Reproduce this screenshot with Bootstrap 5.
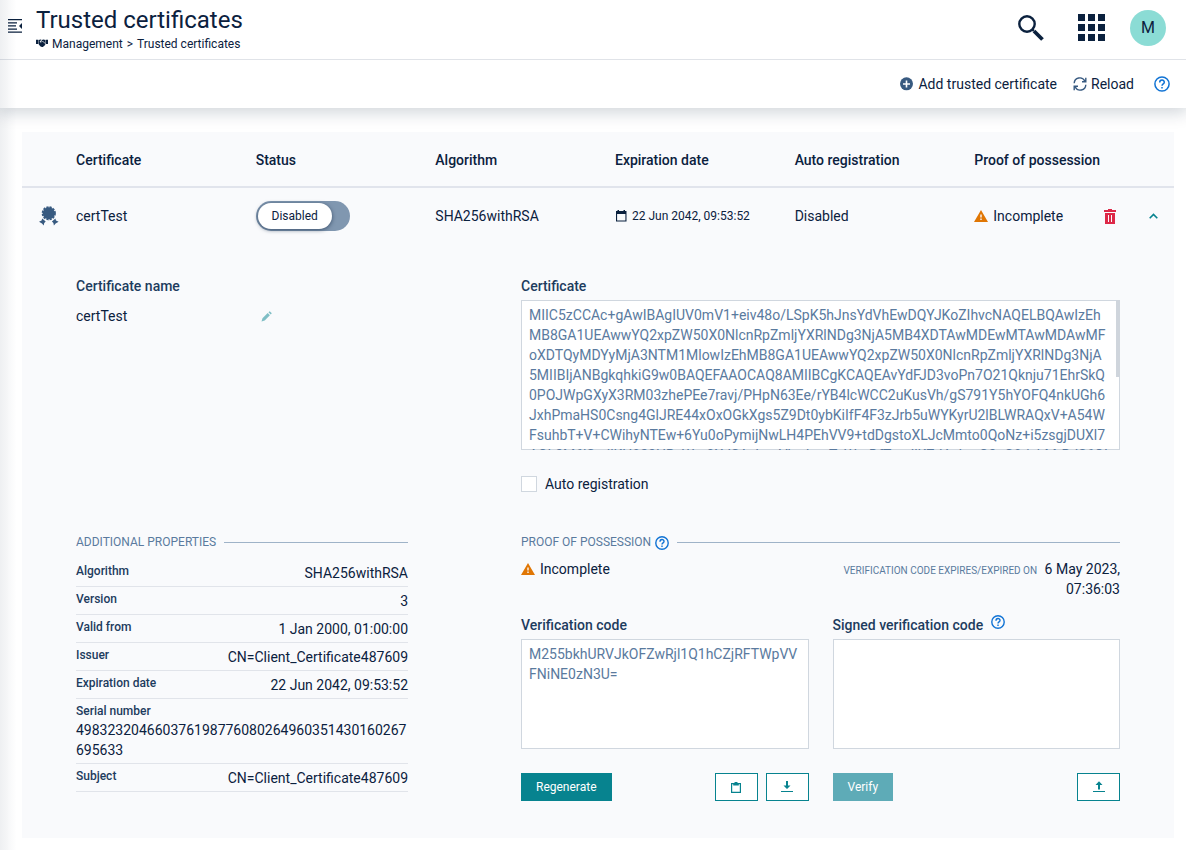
<!DOCTYPE html>
<html lang="en">
<head>
<meta charset="utf-8">
<meta name="viewport" content="width=device-width, initial-scale=1">
<title>Trusted certificates</title>
<link href="https://cdn.jsdelivr.net/npm/bootstrap@5.3.0/dist/css/bootstrap.min.css" rel="stylesheet">
<style>
:root { --ink: #0b213e; --label: #1d3c5e; --muted: #5a7a9e; --slate: #385a80; --teal: #07838f; --line: #d0d7df; --blue: #1173d4; --warn: #e07604; --panel: #f9fafc; }
body { font-family: Roboto, "Liberation Sans", sans-serif; font-size: 14px; line-height: 20px; color: var(--ink); background: #fff; }
svg { display: block; flex: none; }
a { color: inherit; text-decoration: none; }
a:hover { text-decoration: underline; }
.plain-btn { border: 0; background: none; padding: 0; color: inherit; display: flex; align-items: center; }
.top-bar { height: 60px; border-bottom: 1px solid #e0e3e8; padding: 0 20px 4px 8px; position: relative; z-index: 1; background: #fff; }
.title-block { padding-left: 14px; }
.page-title { font-size: 24px; line-height: 32px; font-weight: 400; margin: 0; }
.crumbs { font-size: 12px; line-height: 16px; gap: 4px; }
.find { margin-right: 34px; }
.apps { margin-right: 25px; }
.avatar { width: 36px; height: 36px; background: #8bdcd5; font-size: 16px; }
.tool-bar { height: 48px; padding: 0 16px; box-shadow: 0 2px 16px 2px rgba(11, 33, 62, .2); position: relative; background: #fff; }
.side-shade { position: fixed; left: 0; top: 0; bottom: 0; width: 16px; background: linear-gradient(90deg, rgba(11, 33, 62, .07), rgba(11, 33, 62, 0)); pointer-events: none; z-index: 5; }
.panel { margin: 24px 12px 12px 22px; background: var(--panel); }
.cert-table { width: 100%; table-layout: fixed; }
.cert-table th { height: 55px; padding: 1px 8px 0; font-weight: 500; }
.cert-table thead { border-bottom: 2px solid #e1e4ec; }
.cert-table .cert-row td { height: 57px; padding: 0 8px; }
.cert-table .cert-row .end-cell { padding: 0 3px; }
.cert-table .detail { padding: 32px 54px 37px; }
.icon-col { width: 46px; }
.end-col { width: 28px; }
.small-date { font-size: 12px; }
.red { color: #dd2847; }
.trash { margin-right: 22px; }
.teal { color: var(--teal); }
.warn { color: var(--warn); }
.warn-line { display: flex; align-items: center; gap: 5px; }
.help { color: var(--blue); }
.slate { color: var(--slate); }
.award { margin-left: 9px; }
.flip { display: inline-flex; width: 94px; height: 30px; padding: 2px; border-radius: 15px; background: #8097b0; cursor: pointer; }
.flip-knob { width: 74px; border-radius: 13px; background: #fff; font-size: 12px; line-height: 26px; text-align: center; box-shadow: 0 1px 4px rgba(11, 33, 62, .6); }
.field-label { font-weight: 500; color: var(--label); margin-bottom: 4px; display: block; }
.name-line { width: 196px; margin-top: 10px; }
.code-box { display: block; width: 100%; border: 0; box-shadow: inset 0 0 0 1px var(--line); border-radius: 0; background: #fff; color: var(--muted); padding: 5px 8px; font-size: 14px; line-height: 20px; resize: none; word-break: break-all; }
.code-box.tall { height: 150px; padding-right: 12px; scrollbar-width: none; }
.code-box.short { height: 110px; }
.scroll-thumb { position: absolute; top: 0; right: 0; width: 4px; height: 77px; background: #cfd5dc; pointer-events: none; }
.tick { appearance: none; width: 16px; height: 16px; margin: 0; border: 1px solid var(--line); background: #fff; }
.tick:checked { background: var(--teal); }
.legend-line { font-size: 12px; line-height: 17px; color: var(--muted); font-weight: 400; text-transform: uppercase; margin: 40px 0 8px; display: flex; align-items: center; gap: 8px; }
.legend-line::after { content: ""; flex: 1; height: 1px; background: #9fb3c8; }
.left-pane { padding-right: 89px; }
.props { margin: 0; }
.prop { display: flex; justify-content: space-between; padding: 4px 0 3px; border-bottom: 1px solid #e1e4ea; }
.prop dt { font-size: 12px; line-height: 17px; font-weight: 500; color: var(--label); }
.prop dd { margin: 0; text-align: right; }
.prop.stacked { display: block; }
.prop.stacked dd { text-align: left; word-break: break-all; }
.expiry { width: 280px; }
.expiry-label { font-size: 10px; line-height: 14px; color: var(--muted); }
.act { height: 28px; font-size: 12px; line-height: 16px; border-radius: 0; border: 1px solid var(--teal); padding: 0 14px; color: var(--teal); background: #fff; display: inline-flex; align-items: center; }
.act.solid { background: var(--teal); color: #fff; }
.act:disabled { background: #5eabb7; border-color: #5eabb7; color: #fff; opacity: 1; }
.act.square { width: 43px; padding: 0; justify-content: center; }
</style>
</head>
<body>
<div class="side-shade"></div>
<header class="top-bar d-flex align-items-center">
  <button class="plain-btn mb-1" type="button" aria-label="Toggle navigation">
    <svg width="14" height="14" viewBox="0 0 14 14" fill="currentColor"><path d="M0 0h14v1.300H0zM0 3.200h9v1.300H0zM0 6.300h8v1.300H0zM0 9.400h9v1.300H0zM0 12.500h14v1.300H0zM14 4v6l-3-3z"/></svg>
  </button>
  <div class="title-block flex-grow-1">
    <h1 class="page-title">Trusted certificates</h1>
    <nav class="crumbs d-flex align-items-center" aria-label="Breadcrumb">
      <svg width="12" height="9" viewBox="0 0 12 9" fill="currentColor"><path d="M0 .8h2.300V5H0zM12 .8V5H9.700V.8zM2.700 1L4.600.5 5.500.8 3.900 2.300c-.5.900.9 1.600 1.900.7l.8-.6L9.400 4.900 9 6.300 7.900 6.900 7 7.900 5.900 8 4.200 7.200 2.700 5.300zM9.300 1v3.200L6.800 1.900 5.300 2.800c-.5.100-.7-.1-.6-.3L6.400.8 7.600.5z"/></svg>
      <a href="#">Management</a><span>&gt;</span><a href="#">Trusted certificates</a>
    </nav>
  </div>
  <button class="plain-btn find" type="button" aria-label="Search">
    <svg width="26" height="26" viewBox="0 0 26 26" fill="none" stroke="currentColor"><circle cx="9" cy="9" r="7.700" stroke-width="2.400"/><path d="M14 14l1.800 1.800" stroke-width="2.400"/><path d="M16 16l8.500 8.500" stroke-width="3.800"/></svg>
  </button>
  <button class="plain-btn apps" type="button" aria-label="Applications">
    <svg width="27" height="27" viewBox="0 0 27 27" fill="currentColor"><path d="M0 0h7v7H0zM10 0h7v7h-7zM20 0h7v7h-7zM0 10h7v7H0zM10 10h7v7h-7zM20 10h7v7h-7zM0 20h7v7H0zM10 20h7v7h-7zM20 20h7v7h-7z"/></svg>
  </button>
  <button class="plain-btn avatar rounded-circle justify-content-center" type="button">M</button>
</header>

<div class="tool-bar d-flex align-items-center justify-content-end gap-3">
  <button class="plain-btn gap-1" type="button">
    <svg class="slate" width="14" height="14" viewBox="0 0 14 14"><circle cx="6.500" cy="6.800" r="6.500" fill="currentColor"/><path d="M6.500 3.500v7M3 7h7" stroke="#fff" stroke-width="1.600"/></svg>
    Add trusted certificate
  </button>
  <button class="plain-btn gap-1" type="button">
    <svg class="slate" width="14" height="14" viewBox="0 0 14 14" fill="none" stroke="currentColor" stroke-width="1.400"><path d="M1.200 6.300A5.600 5.600 0 0 1 11.800 4M12.800 7.700A5.600 5.600 0 0 1 2.200 10M12.800.8v3.900H9M1.200 13.200V9.300H5"/></svg>
    Reload
  </button>
  <button class="plain-btn help ms-1" type="button" aria-label="Help">
    <svg width="16" height="16" viewBox="0 0 16 16" fill="none" stroke="currentColor" stroke-width="1.500"><circle cx="8" cy="8" r="7.100"/><path d="M5.700 6.500C5.700 3.300 10.300 3.300 10.300 6.200c0 1.600-2.300 1.700-2.300 3.500M8 10.900v1.600"/></svg>
  </button>
</div>

<main class="panel">
  <table class="cert-table">
    <colgroup><col class="icon-col"><col><col><col><col><col><col><col class="end-col"></colgroup>
    <thead>
      <tr><th></th><th scope="col">Certificate</th><th scope="col">Status</th><th scope="col">Algorithm</th><th scope="col">Expiration date</th><th scope="col">Auto registration</th><th scope="col">Proof of possession</th><th></th></tr>
    </thead>
    <tbody>
      <tr class="cert-row">
        <td class="slate"><svg class="award" width="20" height="20" viewBox="0 0 20 20" fill="currentColor"><circle cx="9.800" cy="7.300" r="6"/><circle cx="9.800" cy="7.300" r="6.200" fill="none" stroke="currentColor" stroke-width="1.800" stroke-dasharray="2.200 1.046"/><path d="M0 15.800l2.600-1.200.6-2.200 3.500 3-1.500 1.500-.5 2.500-1.700-1.800zM19.600 15.800l-2.600-1.200-.6-2.200-3.500 3 1.500 1.500.5 2.500 1.700-1.800z"/></svg></td>
        <td>certTest</td>
        <td><label class="flip align-middle"><input class="visually-hidden" type="checkbox" role="switch"><span class="flip-knob">Disabled</span></label></td>
        <td>SHA256withRSA</td>
        <td><span class="small-date d-flex align-items-center gap-1">
          <svg width="13" height="12" viewBox="0 0 13 12" fill="currentColor"><path d="M1 1h1.500V0h1.500v1h4.500V0h1.500v1H11.500v10.500H1zM2.100 4v6.400h8.300V4z" fill-rule="evenodd"/></svg>
          22 Jun 2042, 09:53:52</span></td>
        <td>Disabled</td>
        <td>
          <div class="warn-line">
            <svg class="warn" width="14" height="12" viewBox="0 0 14 12" fill="currentColor"><path fill-rule="evenodd" d="M7 0l7 12H0zM6.300 4.500v3h1.400v-3zm0 4v1.400h1.400V8.500z"/></svg>
            <span>Incomplete</span>
            <button class="plain-btn red ms-auto trash" type="button" aria-label="Delete">
              <svg width="12" height="15" viewBox="0 0 12 15" fill="currentColor"><path fill-rule="evenodd" d="M4 0h4v1h4v2H0V1h4zM1 4h10v11H1zM4 6v7h1V6zm3 0v7h1V6z"/></svg>
            </button>
          </div>
        </td>
        <td class="teal end-cell"><button class="plain-btn" type="button" aria-label="Collapse row" aria-expanded="true">
          <svg width="9" height="6" viewBox="0 0 9 6" fill="none" stroke="currentColor" stroke-width="1.600"><path d="M.7 5.200L4.500 1.400l3.800 3.800"/></svg></button></td>
      </tr>
      <tr>
        <td class="detail" colspan="8">
          <div class="row">
            <div class="col-5">
              <span class="field-label">Certificate name</span>
              <div class="name-line d-flex align-items-center justify-content-between">
                <span>certTest</span>
                <button class="plain-btn teal opacity-50" type="button" aria-label="Edit name">
                  <svg width="11" height="11" viewBox="0 0 11 11" fill="currentColor"><path d="M1.500 7.300L6.700 2.100l2.200 2.200-5.200 5.200L.5 10.500zM7.500 1.300L8.700.2l2.100 2.100-1.100 1.200z"/></svg>
                </button>
              </div>
            </div>
            <div class="col-7">
              <label class="field-label" for="pem">Certificate</label>
              <div class="position-relative">
                <textarea class="code-box tall" id="pem" readonly spellcheck="false">MIIC5zCCAc+gAwIBAgIUV0mV1+eiv48o/LSpK5hJnsYdVhEwDQYJKoZIhvcNAQELBQAwIzEhMB8GA1UEAwwYQ2xpZW50X0NlcnRpZmljYXRlNDg3NjA5MB4XDTAwMDEwMTAwMDAwMFoXDTQyMDYyMjA3NTM1MlowIzEhMB8GA1UEAwwYQ2xpZW50X0NlcnRpZmljYXRlNDg3NjA5MIIBIjANBgkqhkiG9w0BAQEFAAOCAQ8AMIIBCgKCAQEAvYdFJD3voPn7O21Qknju71EhrSkQ0POJWpGXyX3RM03zhePEe7ravj/PHpN63Ee/rYB4lcWCC2uKusVh/gS791Y5hYOFQ4nkUGh6JxhPmaHS0Csng4GlJRE44xOxOGkXgs5Z9Dt0ybKiIfF4F3zJrb5uWYKyrU2lBLWRAQxV+A54WFsuhbT+V+CWihyNTEw+6Yu0oPymijNwLH4PEhVV9+tdDgstoXLJcMmto0QoNz+i5zsgjDUXl7AGL3M6lSedlKH823HBsWm0XJSAsheoVbwhnaTcWnrDfTgndlKZdAshtnG3oG8tjshMrBdS6QIDAQABoy8wLTAMBgNVHRMEBTADAQH/MB0GA1UdDgQWBBR3pYw1kXc9mQeT5uZsVb2rNfLtGDANBgkqhkiG9w0BAQsFAAOCAQEAk8Zr1dQwYt6nHc4JmVxPe0uSg7LbKq2oTfRi9CyWvXNa5hEsDj3GpMz8BlUkQr6tYw1nHc4JmVxPe0uSg7LbKq2oTfRi9CyWvXNa5hEsDj3GpMz8BlUkQr6tYw1nHc4JmVxPe0uSg7LbKq2oTfRi9CyWvXNa5hEsDj3GpMz8BlUkQr6tYw1nHc4JmVxPe0uSg7LbKq2oTfRi9CyWvXNa5hEsDj3GpMz8BlUkQr6tYw==</textarea>
                <span class="scroll-thumb"></span>
              </div>
              <div class="d-flex align-items-center gap-2 mt-4">
                <input class="tick" type="checkbox" id="auto"><label for="auto">Auto registration</label>
              </div>
            </div>
          </div>
          <div class="row">
            <div class="col-5">
              <section class="left-pane">
                <h2 class="legend-line">Additional properties</h2>
                <dl class="props">
                  <div class="prop"><dt>Algorithm</dt><dd>SHA256withRSA</dd></div>
                  <div class="prop"><dt>Version</dt><dd>3</dd></div>
                  <div class="prop"><dt>Valid from</dt><dd>1 Jan 2000, 01:00:00</dd></div>
                  <div class="prop"><dt>Issuer</dt><dd>CN=Client_Certificate487609</dd></div>
                  <div class="prop"><dt>Expiration date</dt><dd>22 Jun 2042, 09:53:52</dd></div>
                  <div class="prop stacked"><dt>Serial number</dt><dd>498323204660376198776080264960351430160267695633</dd></div>
                  <div class="prop"><dt>Subject</dt><dd>CN=Client_Certificate487609</dd></div>
                </dl>
              </section>
            </div>
            <div class="col-7">
              <h2 class="legend-line"><span class="d-flex align-items-center gap-1">Proof of possession
                <button class="plain-btn help" type="button" aria-label="About proof of possession">
                  <svg width="14" height="14" viewBox="0 0 16 16" fill="none" stroke="currentColor" stroke-width="1.600"><circle cx="8" cy="8" r="7.100"/><path d="M5.700 6.500C5.700 3.300 10.300 3.300 10.300 6.200c0 1.600-2.300 1.700-2.300 3.500M8 10.900v1.600"/></svg>
                </button></span></h2>
              <div class="d-flex justify-content-between align-items-start">
                <div class="warn-line">
                  <svg class="warn" width="14" height="12" viewBox="0 0 14 12" fill="currentColor"><path fill-rule="evenodd" d="M7 0l7 12H0zM6.300 4.500v3h1.400v-3zm0 4v1.400h1.400V8.500z"/></svg>
                  <span>Incomplete</span>
                </div>
                <div class="expiry text-end"><span class="expiry-label text-uppercase me-1">Verification code expires/expired on</span> 6 May 2023, 07:36:03</div>
              </div>
              <div class="row mt-3">
                <div class="col-6">
                  <label class="field-label" for="code">Verification code</label>
                  <textarea class="code-box short" id="code" readonly spellcheck="false">M255bkhURVJkOFZwRjl1Q1hCZjRFTWpVVFNiNE0zN3U=</textarea>
                  <div class="d-flex gap-2 mt-4">
                    <button class="btn act solid me-auto" type="button">Regenerate</button>
                    <button class="btn act square" type="button" aria-label="Copy">
                      <svg width="10" height="11" viewBox="0 0 10 11"><path fill="currentColor" fill-rule="evenodd" d="M0 1h3.300a1.700 1.200 0 0 1 3.400 0H10v10H0zM1.200 2.200v7.600h7.600V2.200h-1v1.300H2.200V2.200z"/></svg>
                    </button>
                    <button class="btn act square" type="button" aria-label="Download">
                      <svg width="12" height="12" viewBox="0 0 12 12" fill="currentColor"><path d="M5 0h2v4.500h2.500L6 8 2.500 4.500H5zM0 10h12v1H0z"/></svg>
                    </button>
                  </div>
                </div>
                <div class="col-6">
                  <div class="d-flex gap-2">
                    <label class="field-label" for="signed">Signed verification code</label>
                    <button class="plain-btn help align-self-start" type="button" aria-label="About signed verification code">
                      <svg width="14" height="14" viewBox="0 0 16 16" fill="none" stroke="currentColor" stroke-width="1.600"><circle cx="8" cy="8" r="7.100"/><path d="M5.700 6.500C5.700 3.300 10.300 3.300 10.300 6.200c0 1.600-2.300 1.700-2.300 3.500M8 10.900v1.600"/></svg>
                    </button>
                  </div>
                  <textarea class="code-box short" id="signed" spellcheck="false"></textarea>
                  <div class="d-flex justify-content-between mt-4">
                    <button class="btn act" type="button" disabled>Verify</button>
                    <button class="btn act square" type="button" aria-label="Upload">
                      <svg width="12" height="12" viewBox="0 0 12 12" fill="currentColor"><path d="M5 8.500h2V4h2.500L6 .3 2.500 4H5zM0 10h12v1H0z"/></svg>
                    </button>
                  </div>
                </div>
              </div>
            </div>
          </div>
        </td>
      </tr>
    </tbody>
  </table>
</main>
<script src="https://cdn.jsdelivr.net/npm/bootstrap@5.3.0/dist/js/bootstrap.bundle.min.js"></script>
</body>
</html>
